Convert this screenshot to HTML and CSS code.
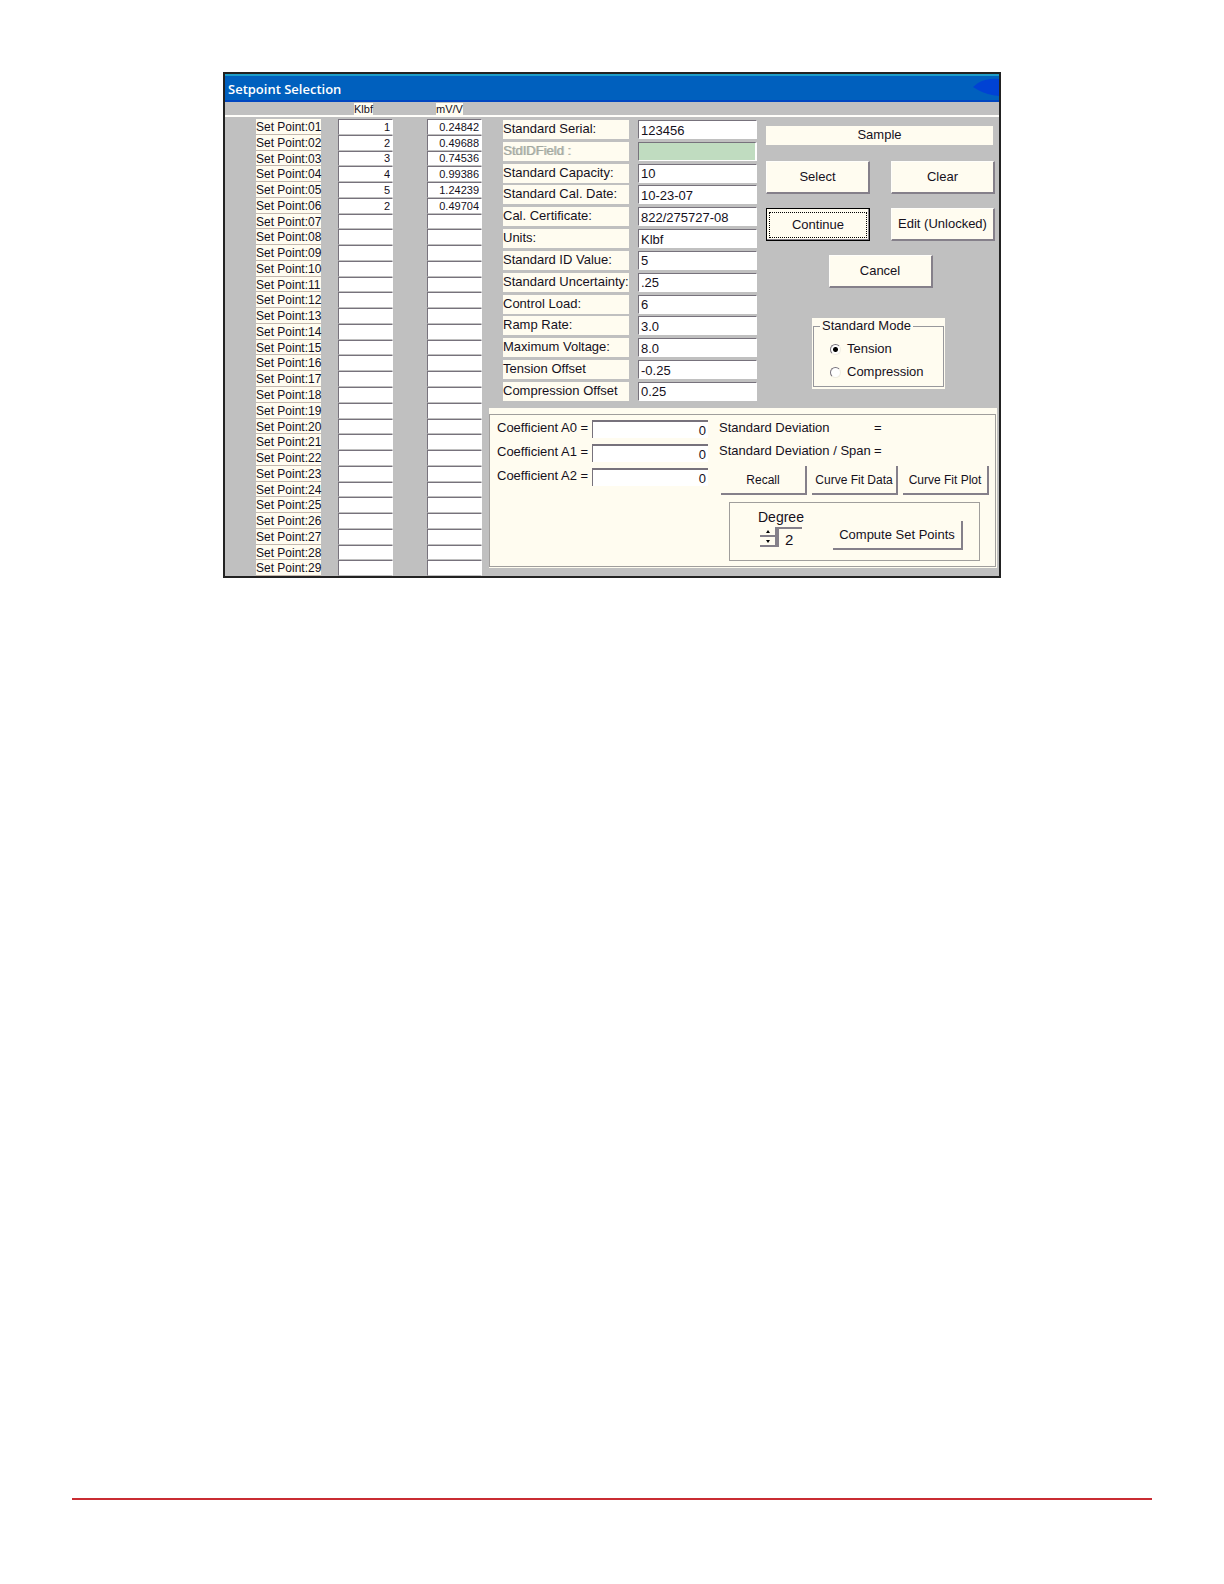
FILE: index.html
```html
<!DOCTYPE html>
<html lang="en">
<head>
  <meta charset="UTF-8">
  <title>Setpoint Selection</title>
  <meta name="viewport" content="width=device-width, initial-scale=1.0">
  <link rel="stylesheet" href="styles.css">
</head>
<body>
  <main class="page">
    <div class="window">
      <div class="title-bar">
        <h1>Setpoint Selection</h1>
        <svg class="title-swoosh" viewBox="0 0 26 18" aria-hidden="true">
          <path d="M0 9 L5 5 Q14 0 26 1 V18 Q14 17 5 12 Z" fill="#0042d4"/>
        </svg>
      </div>

      <div class="column-heads">
        <span class="head-klbf"><span>Klbf</span></span>
        <span class="head-mvv"><span>mV/V</span></span>
      </div>

      <div class="window-body">
        <div class="set-points">
          <div class="point"><label for="k01">Set Point:01</label><input type="text" id="k01" value="1"><input type="text" aria-label="mV/V 01" value="0.24842"></div>
          <div class="point"><label for="k02">Set Point:02</label><input type="text" id="k02" value="2"><input type="text" aria-label="mV/V 02" value="0.49688"></div>
          <div class="point"><label for="k03">Set Point:03</label><input type="text" id="k03" value="3"><input type="text" aria-label="mV/V 03" value="0.74536"></div>
          <div class="point"><label for="k04">Set Point:04</label><input type="text" id="k04" value="4"><input type="text" aria-label="mV/V 04" value="0.99386"></div>
          <div class="point"><label for="k05">Set Point:05</label><input type="text" id="k05" value="5"><input type="text" aria-label="mV/V 05" value="1.24239"></div>
          <div class="point"><label for="k06">Set Point:06</label><input type="text" id="k06" value="2"><input type="text" aria-label="mV/V 06" value="0.49704"></div>
          <div class="point"><label for="k07">Set Point:07</label><input type="text" id="k07"><input type="text" aria-label="mV/V 07"></div>
          <div class="point"><label for="k08">Set Point:08</label><input type="text" id="k08"><input type="text" aria-label="mV/V 08"></div>
          <div class="point"><label for="k09">Set Point:09</label><input type="text" id="k09"><input type="text" aria-label="mV/V 09"></div>
          <div class="point"><label for="k10">Set Point:10</label><input type="text" id="k10"><input type="text" aria-label="mV/V 10"></div>
          <div class="point"><label for="k11">Set Point:11</label><input type="text" id="k11"><input type="text" aria-label="mV/V 11"></div>
          <div class="point"><label for="k12">Set Point:12</label><input type="text" id="k12"><input type="text" aria-label="mV/V 12"></div>
          <div class="point"><label for="k13">Set Point:13</label><input type="text" id="k13"><input type="text" aria-label="mV/V 13"></div>
          <div class="point"><label for="k14">Set Point:14</label><input type="text" id="k14"><input type="text" aria-label="mV/V 14"></div>
          <div class="point"><label for="k15">Set Point:15</label><input type="text" id="k15"><input type="text" aria-label="mV/V 15"></div>
          <div class="point"><label for="k16">Set Point:16</label><input type="text" id="k16"><input type="text" aria-label="mV/V 16"></div>
          <div class="point"><label for="k17">Set Point:17</label><input type="text" id="k17"><input type="text" aria-label="mV/V 17"></div>
          <div class="point"><label for="k18">Set Point:18</label><input type="text" id="k18"><input type="text" aria-label="mV/V 18"></div>
          <div class="point"><label for="k19">Set Point:19</label><input type="text" id="k19"><input type="text" aria-label="mV/V 19"></div>
          <div class="point"><label for="k20">Set Point:20</label><input type="text" id="k20"><input type="text" aria-label="mV/V 20"></div>
          <div class="point"><label for="k21">Set Point:21</label><input type="text" id="k21"><input type="text" aria-label="mV/V 21"></div>
          <div class="point"><label for="k22">Set Point:22</label><input type="text" id="k22"><input type="text" aria-label="mV/V 22"></div>
          <div class="point"><label for="k23">Set Point:23</label><input type="text" id="k23"><input type="text" aria-label="mV/V 23"></div>
          <div class="point"><label for="k24">Set Point:24</label><input type="text" id="k24"><input type="text" aria-label="mV/V 24"></div>
          <div class="point"><label for="k25">Set Point:25</label><input type="text" id="k25"><input type="text" aria-label="mV/V 25"></div>
          <div class="point"><label for="k26">Set Point:26</label><input type="text" id="k26"><input type="text" aria-label="mV/V 26"></div>
          <div class="point"><label for="k27">Set Point:27</label><input type="text" id="k27"><input type="text" aria-label="mV/V 27"></div>
          <div class="point"><label for="k28">Set Point:28</label><input type="text" id="k28"><input type="text" aria-label="mV/V 28"></div>
          <div class="point"><label for="k29">Set Point:29</label><input type="text" id="k29"><input type="text" aria-label="mV/V 29"></div>
        </div>

        <div class="details">
          <div class="upper">
            <div class="fields">
              <div class="field"><label for="serial">Standard Serial:</label><input type="text" id="serial" value="123456"></div>
              <div class="field disabled"><label for="stdid">StdIDField :</label><input type="text" id="stdid" disabled></div>
              <div class="field"><label for="capacity">Standard Capacity:</label><input type="text" id="capacity" value="10"></div>
              <div class="field"><label for="caldate">Standard Cal. Date:</label><input type="text" id="caldate" value="10-23-07"></div>
              <div class="field"><label for="cert">Cal. Certificate:</label><input type="text" id="cert" value="822/275727-08"></div>
              <div class="field"><label for="units">Units:</label><input type="text" id="units" value="Klbf"></div>
              <div class="field"><label for="idvalue">Standard ID Value:</label><input type="text" id="idvalue" value="5"></div>
              <div class="field"><label for="uncertainty">Standard Uncertainty:</label><input type="text" id="uncertainty" value=".25"></div>
              <div class="field"><label for="load">Control Load:</label><input type="text" id="load" value="6"></div>
              <div class="field"><label for="ramp">Ramp Rate:</label><input type="text" id="ramp" value="3.0"></div>
              <div class="field"><label for="voltage">Maximum Voltage:</label><input type="text" id="voltage" value="8.0"></div>
              <div class="field"><label for="tension-offset">Tension Offset</label><input type="text" id="tension-offset" value="-0.25"></div>
              <div class="field"><label for="compression-offset">Compression Offset</label><input type="text" id="compression-offset" value="0.25"></div>
            </div>

            <div class="actions">
              <div class="sample">Sample</div>
              <div class="button-row">
                <button type="button" class="btn">Select</button>
                <button type="button" class="btn">Clear</button>
              </div>
              <div class="button-row">
                <button type="button" class="btn default"><span>Continue</span></button>
                <button type="button" class="btn">Edit (Unlocked)</button>
              </div>
              <button type="button" class="btn cancel">Cancel</button>
              <div class="mode">
                <fieldset>
                  <legend>Standard Mode</legend>
                  <label><input type="radio" name="mode" checked>Tension</label>
                  <label><input type="radio" name="mode">Compression</label>
                </fieldset>
              </div>
            </div>
          </div>

          <div class="panel">
            <div class="panel-frame">
              <div class="coefficients">
                <div class="coefficient"><label for="a0">Coefficient A0 =</label><input type="text" id="a0" value="0"></div>
                <div class="coefficient"><label for="a1">Coefficient A1 =</label><input type="text" id="a1" value="0"></div>
                <div class="coefficient"><label for="a2">Coefficient A2 =</label><input type="text" id="a2" value="0"></div>
              </div>

              <div class="curve">
                <div class="deviation"><span>Standard Deviation</span><span>=</span></div>
                <div class="deviation"><span>Standard Deviation / Span</span><span>=</span></div>
                <div class="curve-buttons">
                  <button type="button" class="flat-btn">Recall</button>
                  <button type="button" class="flat-btn">Curve Fit Data</button>
                  <button type="button" class="flat-btn">Curve Fit Plot</button>
                </div>
                <div class="compute">
                  <div class="degree">
                    <label for="degree">Degree</label>
                    <div class="spinner">
                      <div class="spin-buttons">
                        <button type="button" aria-label="Increase degree"><svg viewBox="0 0 4 3"><path d="M2 0 L4 3 H0 Z"/></svg></button>
                        <button type="button" aria-label="Decrease degree"><svg viewBox="0 0 4 3"><path d="M0 0 H4 L2 3 Z"/></svg></button>
                      </div>
                      <input type="text" id="degree" value="2">
                    </div>
                  </div>
                  <button type="button" class="flat-btn large">Compute Set Points</button>
                </div>
              </div>
            </div>
          </div>
        </div>
      </div>
    </div>
  </main>

  <hr class="footer-rule">
</body>
</html>
```
FILE: styles.css
```css
* {
  margin: 0;
  padding: 0;
  box-sizing: border-box;
}

body {
  display: flex;
  flex-direction: column;
  min-height: 100vh;
  padding: 72px 72px 84px;
  background: #fff;
  color: #15101c;
  font-family: "Liberation Sans", Arial, sans-serif;
  font-size: 13px;
  line-height: 16px;
}

input, button {
  font: inherit;
  color: inherit;
  border-radius: 0;
}

.page {
  flex: 1;
}

.footer-rule {
  border: none;
  border-top: 2px solid #c92c32;
}

/* Window */
.window {
  max-width: 778px;
  margin: 0 auto;
  background: #c0c0c0;
  border: 2px solid #222;
}

.title-bar {
  display: flex;
  align-items: center;
  justify-content: space-between;
  height: 28px;
  padding-top: 2px;
  padding-left: 3px;
  background: #0060be;
  border-top: 2px solid #1c9cc8;
  border-bottom: 2px solid #0046c0;
}

.title-bar h1 {
  font-family: "Open Sans", "Noto Sans", sans-serif;
  font-size: 13px;
  font-weight: 600;
  color: #fff;
}

.title-swoosh {
  align-self: flex-start;
  width: 26px;
  height: 18px;
}

.column-heads {
  display: grid;
  grid-template-columns: 55px 55px;
  gap: 34px;
  height: 15px;
  padding-left: 113px;
  padding-top: 1px;
  border-bottom: 2px solid #fffefa;
  font-size: 11px;
  line-height: 12px;
}

.column-heads span span {
  display: inline-block;
  background: #fffcf0;
}

.head-klbf {
  padding-left: 16px;
}

.head-mvv {
  padding-left: 9px;
}

.window-body {
  display: flex;
}

/* Set point list */
.set-points {
  display: flex;
  flex-direction: column;
  padding: 2px 7px 0 31px;
  font-size: 12px;
  line-height: 14px;
}

.point {
  flex: 1;
  display: grid;
  grid-template-columns: 82px 89px 55px;
  min-height: 15px;
}

.point label {
  margin-right: 17px;
  padding-top: 1px;
  background: #fffcf0;
  box-shadow: inset 0 -1px 0 #c4b8ae;
  white-space: nowrap;
}

.point input {
  width: 55px;
  height: 100%;
  padding-right: 2px;
  background: #fff;
  border: 1px solid #77727c;
  border-right-color: #fff;
  border-bottom-color: #c0c0c0;
  font-size: 11px;
  line-height: 12px;
  text-align: right;
}

/* Standard details */
.details {
  flex: 1;
  min-width: 0;
  padding: 3px 2px 8px 0;
}

.upper {
  display: flex;
  gap: 9px;
  padding-left: 14px;
  padding-right: 2px;
}

.fields {
  flex: 1;
  display: flex;
  flex-direction: column;
  justify-content: space-between;
  min-height: 281px;
}

.field {
  display: grid;
  grid-template-columns: 126px 1fr;
  gap: 9px;
}

.field label {
  height: 19px;
  background: #fffcf0;
  line-height: 17px;
  white-space: nowrap;
}

.field input {
  width: 100%;
  height: 19px;
  min-width: 0;
  padding: 1px 2px 0;
  background: #fff;
  border: 1px solid #fff;
  border-top-color: #77727c;
  border-left-color: #77727c;
}

.field.disabled label {
  color: #a3a89f;
  text-shadow: 1px 0 0 #c4c8c0;
}

.field.disabled input {
  background: #c0dcc0;
  border-right-width: 2px;
}

/* Buttons and mode */
.actions {
  display: flex;
  flex-direction: column;
  width: 229px;
  padding-top: 6px;
}

.sample {
  height: 19px;
  margin-right: 2px;
  margin-bottom: 16px;
  background: #fffcf0;
  line-height: 18px;
  text-align: center;
}

.button-row {
  display: flex;
  justify-content: space-between;
  margin-bottom: 14px;
}

.btn {
  width: 104px;
  height: 33px;
  background: #fffcf0;
  border: 1px solid #fffefa;
  border-right: 2px solid #85808a;
  border-bottom: 2px solid #85808a;
  white-space: nowrap;
}

.btn.default {
  padding: 2px;
  border: 1px solid #000;
  box-shadow: inset -1px -1px 0 #85808a;
}

.btn.default span {
  display: block;
  padding: 4px 0;
  border: 1px dotted #000;
}

.btn.cancel {
  align-self: center;
}

.mode {
  align-self: center;
  width: 133px;
  margin-top: 30px;
  margin-right: 4px;
  padding: 0 1px 2px;
  background: #fffcf0;
}

.mode fieldset {
  padding: 7px 0 6px 16px;
  border: 1px solid #98989c;
}

.mode legend {
  margin-left: -10px;
  padding: 0 2px;
}

.mode label {
  display: flex;
  align-items: center;
  gap: 6px;
}

.mode label + label {
  margin-top: 7px;
}

.mode input {
  appearance: none;
  width: 11px;
  height: 11px;
  background: #fff;
  border: 1px solid #77727c;
  border-right-color: #f0ede2;
  border-bottom-color: #f0ede2;
  border-radius: 50%;
}

.mode input:checked {
  background: radial-gradient(circle, #000 2px, #fff 3px);
}

/* Curve fit panel */
.panel {
  margin-top: 7px;
  padding: 6px 1px 1px 0;
  background: #fffcf0;
}

.panel-frame {
  display: flex;
  justify-content: space-between;
  padding: 5px 6px 5px 7px;
  border: 1px solid #a09e9c;
}

.coefficients {
  display: flex;
  flex-direction: column;
  gap: 6px;
}

.coefficient {
  display: grid;
  grid-template-columns: 95px 116px;
}

.coefficient input {
  width: 100%;
  height: 18px;
  padding: 1px 2px 0;
  background: #fff;
  border: none;
  border-top: 2px solid #77727c;
  border-left: 1px solid #77727c;
  text-align: right;
}

.curve {
  width: 270px;
}

.deviation {
  display: grid;
  grid-template-columns: 155px auto;
  margin-bottom: 7px;
  white-space: nowrap;
}

.curve-buttons {
  display: flex;
  justify-content: space-between;
  padding-left: 2px;
}

.flat-btn {
  width: 86px;
  height: 29px;
  background: #fffcf0;
  border: none;
  border-right: 2px solid #85808a;
  border-bottom: 2px solid #85808a;
  font-size: 12px;
  white-space: nowrap;
}

.flat-btn.large {
  align-self: flex-end;
  width: 130px;
  font-size: 13px;
}

.compute {
  display: flex;
  justify-content: space-between;
  height: 59px;
  margin: 7px 9px 0 10px;
  padding: 6px 16px 10px 28px;
  border: 1px solid #a09e9c;
}

.degree label {
  display: block;
  font-size: 14px;
}

.spinner {
  display: flex;
  padding: 2px 0 0 2px;
}

.spin-buttons {
  display: flex;
  flex-direction: column;
}

.spin-buttons button {
  display: flex;
  align-items: center;
  justify-content: center;
  width: 17px;
  height: 10px;
  background: #fffcf0;
  border: none;
  border-right: 2px solid #85808a;
  border-bottom: 2px solid #85808a;
}

.spin-buttons svg {
  width: 4px;
  height: 3px;
}

.spinner input {
  width: 25px;
  height: 20px;
  padding: 2px 6px 0;
  background: #fffcf0;
  border: none;
  border-top: 2px solid #85808a;
  border-left: 2px solid #85808a;
  font-size: 15px;
}
```
